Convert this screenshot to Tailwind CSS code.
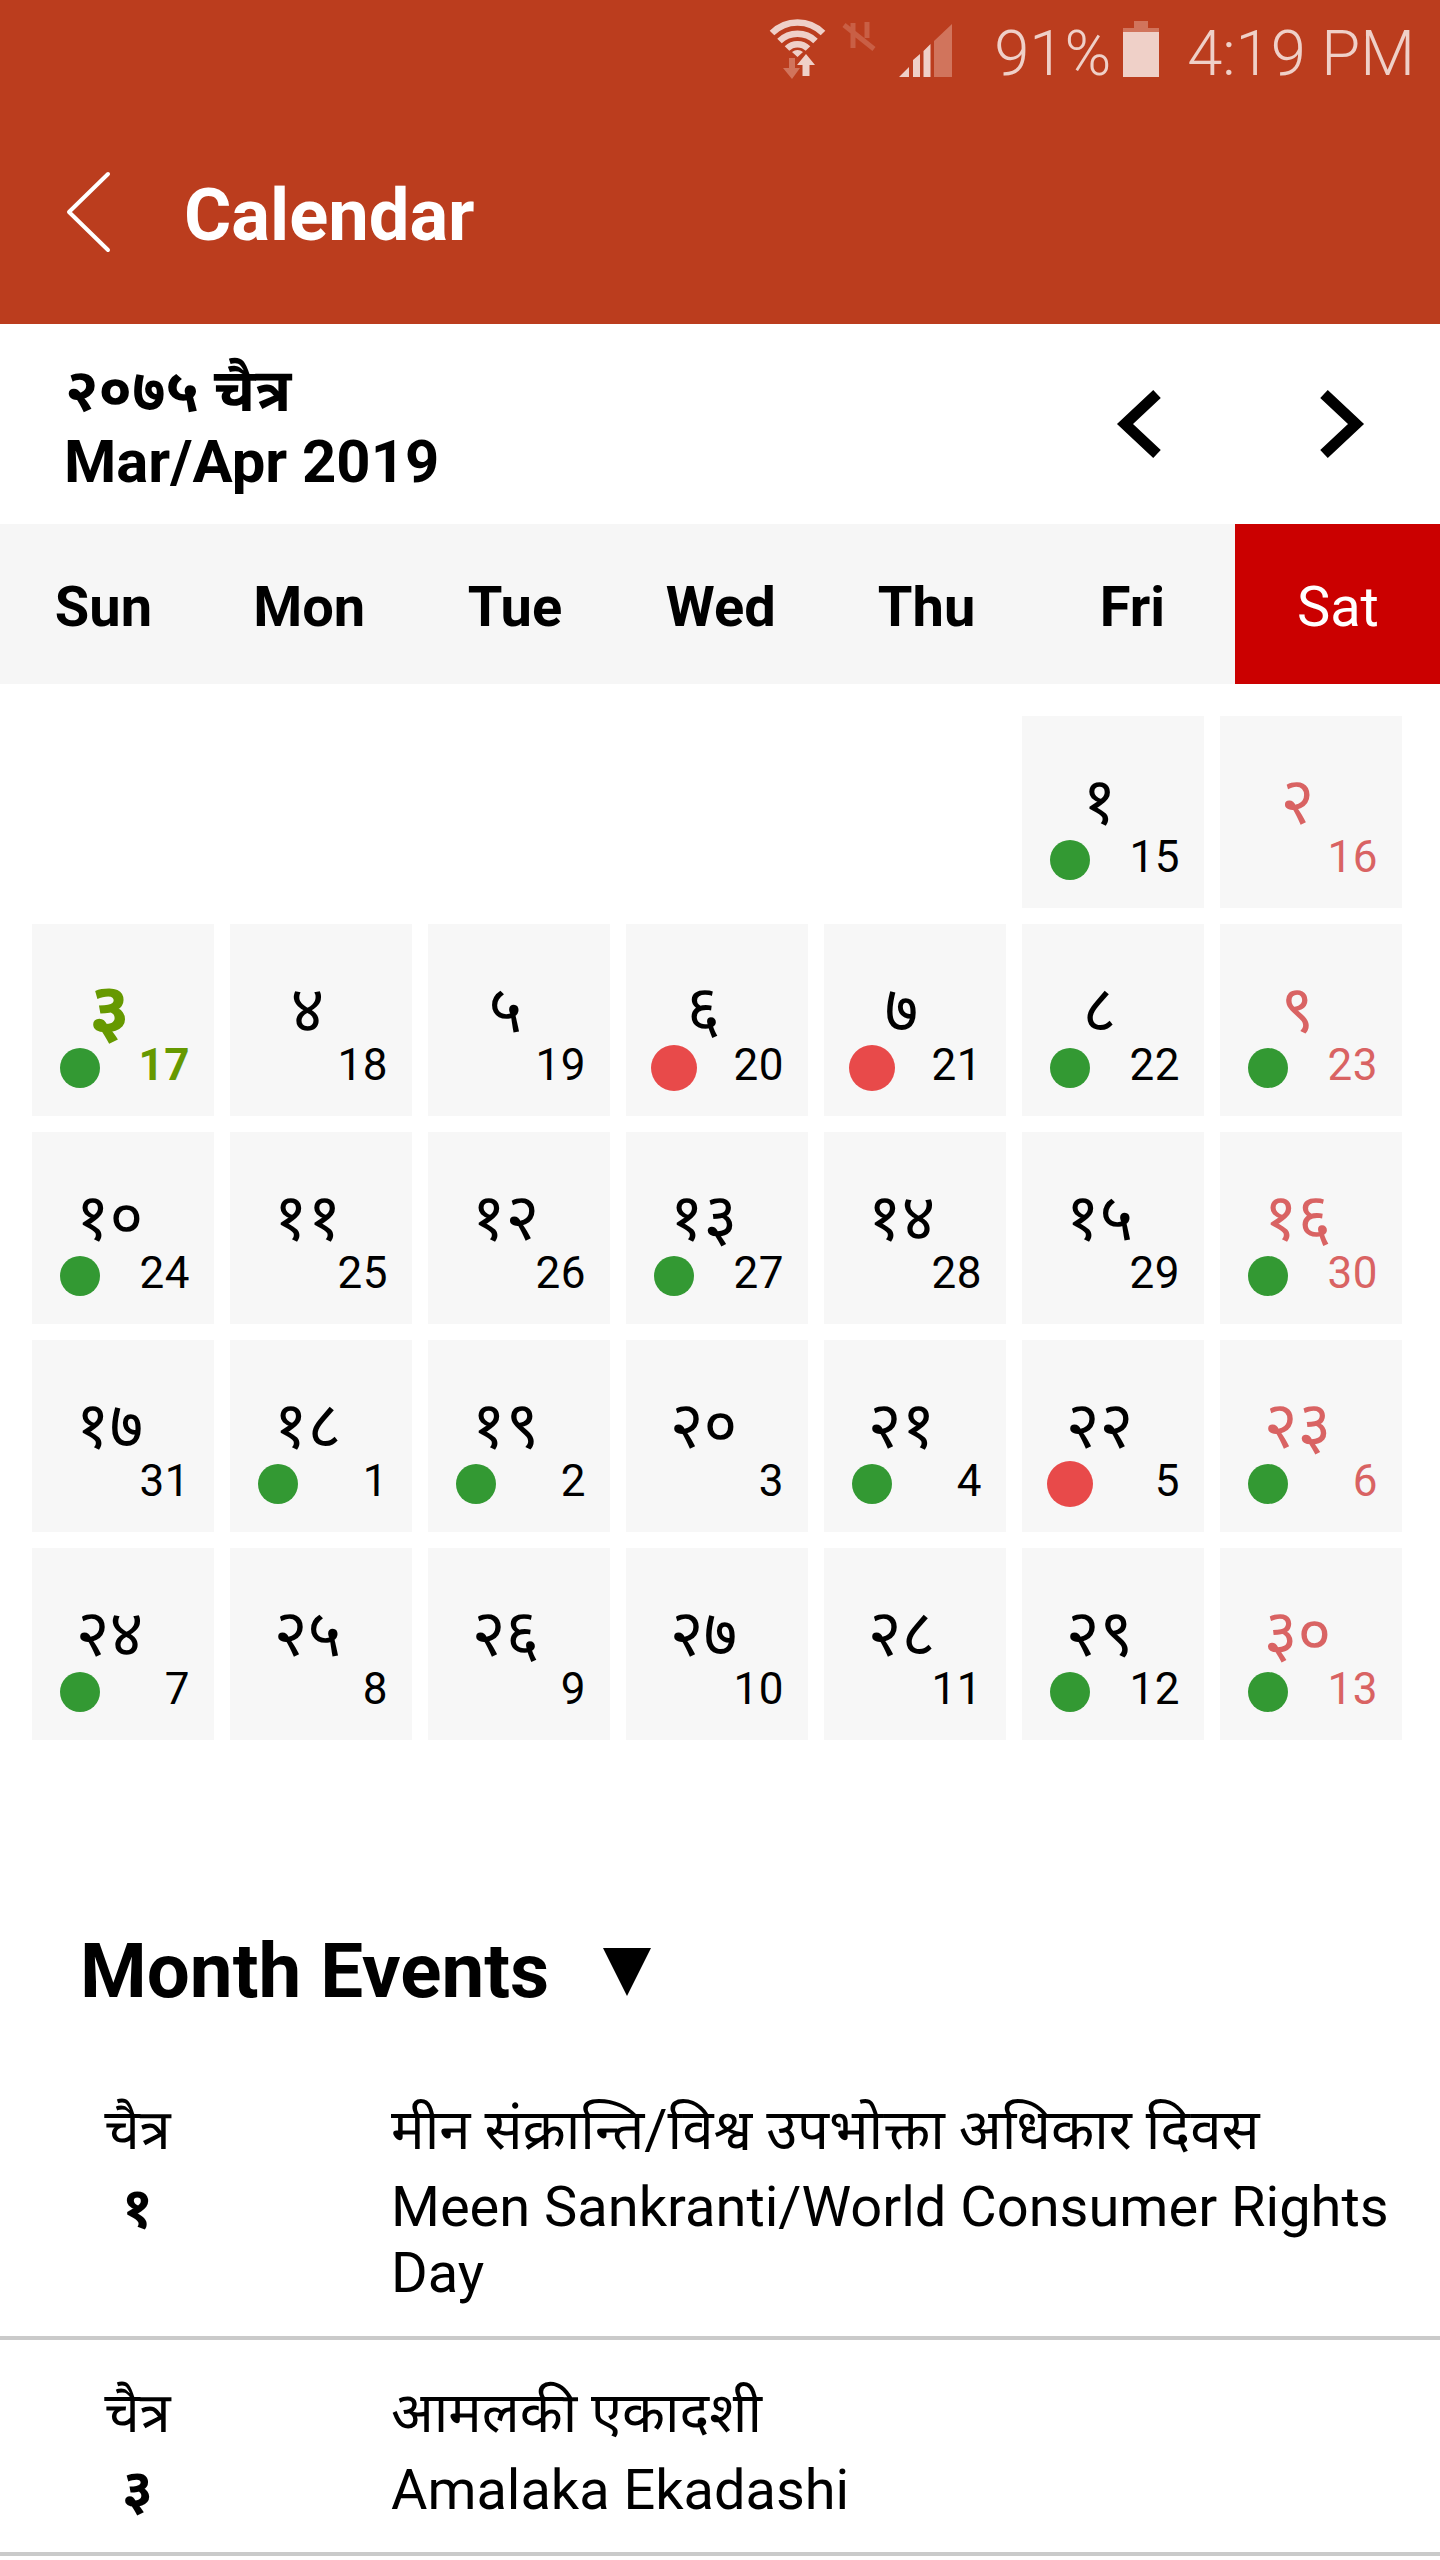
<!DOCTYPE html>
<html lang="en">
<head>
<meta charset="utf-8">
<title>Calendar</title>
<script src="https://cdn.jsdelivr.net/npm/@tailwindcss/browser@4"></script>
</head>
<body class="w-[1440px] h-[2560px] overflow-hidden bg-white text-black font-['Roboto','Noto_Sans_Devanagari','Noto_Sans',sans-serif]">
<header class="h-[324px] bg-[#bb3d1e] flex flex-col">
  <div class="h-[104px] flex items-center justify-end pr-[25px] text-[63.300px] leading-none font-[350] text-[#efd0c8]">
    <svg class="w-[212px] h-[104px]" viewBox="764 0 212 104" fill="none">
      <g stroke="#efd0c8" stroke-width="6.5">
        <path d="M770 33a36 36 0 0 1 51 0"/><path d="M777.500 41a26 26 0 0 1 36 0"/><path d="M785 48.500a15 15 0 0 1 21 0"/>
      </g>
      <path fill="#efd0c8" d="M790 52q5.500-4 11 0l-5.500 5zM804 54l9 11h-5.500v11h-7v-11h-5.500z"/>
      <path fill="#d1745c" d="M787 58h6v10h5l-8 11-9-11h6z"/>
      <g stroke="#c95f45" stroke-width="5"><path d="M851 48v-25M865 22v16M842 25l30 24"/></g>
      <path fill="#efd0c8" d="M897 77l10-10v10zM911 77v-17l7-6v23zM921.500 77v-26l7-7v33z"/>
      <path fill="#d1745c" d="M932 77v-36l18-17v53z"/>
    </svg>
    <span class="ml-4 pt-[3px]">91%</span>
    <svg class="ml-3 w-9 h-[104px]" viewBox="0 0 36 104"><path fill="#d1745c" d="M11 21h14v7h11v4h-36v-4h11z"/><path fill="#efd0c8" d="M0 32h36v45h-36z"/></svg>
    <span class="ml-7 pt-[3px]">4:19 PM</span>
  </div>
  <div class="h-[220px] flex items-start pt-[66px] pl-[64px]">
    <svg class="w-[48px] h-[84px]" viewBox="64 170 48 84" fill="none"><path d="M108 174L69 212l39 38" stroke="#fff" stroke-width="4" stroke-linecap="round" stroke-linejoin="round"/></svg>
    <h1 class="ml-[72px] pt-[10px] text-[72.3px] leading-none font-bold text-white">Calendar</h1>
  </div>
</header>
<section class="h-[200px] flex justify-between pl-[64px] pr-[72px]">
  <div class="pt-[32px] text-[59.800px] leading-[71px] font-bold"><p class="pl-px">२०७५ चैत्र</p><p>Mar/Apr 2019</p></div>
  <div class="pt-[62px] flex gap-[151px] h-[140px]">
    <svg class="w-[52px] h-[76px]" viewBox="0 0 52 76" fill="none"><path d="M44 8L12 38l32 30" stroke="#000" stroke-width="11"/></svg>
    <svg class="w-[52px] h-[76px]" viewBox="0 0 52 76" fill="none"><path d="M8 8L40 38 8 68" stroke="#000" stroke-width="11"/></svg>
  </div>
</section>
<div class="h-[160px] grid grid-cols-[repeat(6,205.800px)_1fr] bg-[#f6f6f6] text-[56px] font-bold text-center leading-[160px] *:h-[160px] *:pt-[3px] *:pl-px">
  <div>Sun</div><div>Mon</div><div>Tue</div><div>Wed</div><div>Thu</div><div>Fri</div><div class="bg-[#cb0000] text-white font-normal">Sat</div>
</div>
<main id="days" class="mt-8 ml-8 grid grid-cols-[repeat(7,182px)] gap-4 auto-rows-[192px]"></main>
<section>
  <h2 class="mt-[185px] ml-[80px] flex items-center gap-[54px] text-[76.300px] leading-[92px] font-bold"><span>Month Events</span>
    <svg class="mt-[2px] w-[48px] h-[48px]" viewBox="0 0 48 48"><path d="M0 0h48L24 48z"/></svg></h2>
  <article class="mt-[79px] flex border-b-4 border-[#cacaca] h-[244px] text-[56px] leading-[66px]">
    <div class="w-[275px] pt-px text-center"><p class="mb-[12px]">चैत्र</p><p class="font-bold">१</p></div>
    <div class="ml-[116px] w-[1040px]"><p lang="ne" class="mb-[12px] pt-px text-[56.300px]">मीन संक्रान्ति/विश्व उपभोक्ता अधिकार दिवस</p><p class="-mt-px">Meen Sankranti/World Consumer Rights Day</p></div>
  </article>
  <article class="pt-[40px] flex border-b-4 border-[#cacaca] h-[216px] text-[56px] leading-[66px]">
    <div class="w-[275px] text-center"><p class="mb-[11px]">चैत्र</p><p class="font-bold">३</p></div>
    <div class="ml-[116px] w-[1040px]"><p lang="ne" class="mb-[11px]">आमलकी एकादशी</p><p class="text-[55.900px]">Amalaka Ekadashi</p></div>
  </article>
</section>
<script>
const dots = {1:'g',3:'g',6:'r',7:'r',8:'g',9:'g',10:'g',13:'g',16:'g',18:'g',19:'g',21:'g',22:'r',23:'g',24:'g',29:'g',30:'g'};
const nepali = n => String(n).replace(/\d/g, d => '०१२३४५६७८९'[d]);
let html = '';
for (let n = 1; n <= 30; n++) {
  const ad = n <= 17 ? n + 14 : n - 17;
  const tone = n === 3 ? 'text-[#669900]' : n % 7 === 2 ? 'text-[#d96363]' : 'text-black';
  const start = n === 1 ? 'col-start-6' : '';
  const dot = dots[n] === 'g' ? '<i class="absolute left-[28px] top-[124px] size-[40px] rounded-full bg-[#339933]"></i>'
    : dots[n] === 'r' ? '<i class="absolute left-[24.5px] top-[121px] size-[46px] rounded-full bg-[#e84a4a]"></i>' : '';
  html += `<div class="relative bg-[#f7f7f7] ${tone} ${start}">${dot}
    <p class="pt-[53px] pr-[27px] text-center leading-[66px] ${n === 3 ? 'text-[74px] font-bold' : 'text-[65px]'}">${nepali(n)}</p>
    <p class="-mt-[4px] pr-[24px] text-right text-[44px] leading-[52px] tracking-[0.5px] ${n === 3 ? 'font-bold' : ''}">${ad}</p></div>`;
}
document.getElementById('days').innerHTML = html;
</script>
</body>
</html>
